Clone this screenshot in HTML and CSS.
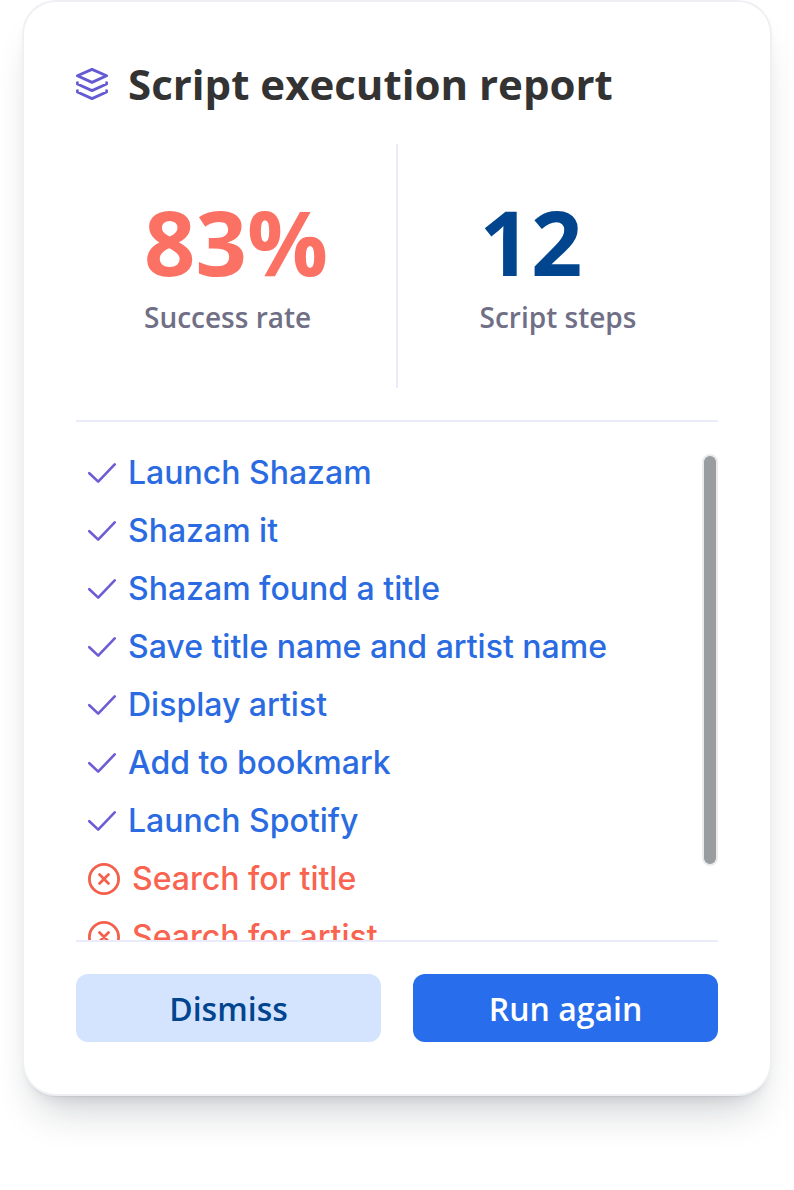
FILE: index.html
```html
<!DOCTYPE html>
<html lang="en">
<head>
    <meta charset="UTF-8">
    <meta name="viewport" content="width=device-width, initial-scale=1.0">
    <title>Script execution report</title>
    <link rel="stylesheet" href="styles.css">
</head>

<body>
    <!--icons used more than once-->
    <svg class="sprite" aria-hidden="true">
        <symbol id="check" viewBox="0 0 28 32">
            <path d="M1.3 16.2 L10.2 24.6 L26.7 7.4"/>
        </symbol>
        <symbol id="cross" viewBox="0 0 32 32">
            <circle cx="16" cy="16" r="14.6"/>
            <path d="M11.5 11.5 L20.5 20.5 M20.5 11.5 L11.5 20.5"/>
        </symbol>
    </svg>

    <main class="card">
        <header class="cardHeader">
            <svg class="layersIcon" viewBox="0 0 32 32" aria-hidden="true">
                <path d="M16 1.4 L30.6 7.8 L16 14.4 L1.4 7.8 Z"/>
                <path d="M1.4 14.7 V16 L16 22.6 L30.6 16 V14.7"/>
                <path d="M1.4 22.7 V24 L16 30.6 L30.6 24 V22.7"/>
            </svg>
            <h1>Script execution report</h1>
        </header>

        <section class="stats">
            <div class="stat">
                <div class="number success">83%</div>
                <div class="label">Success rate</div>
            </div>
            <div class="divider"></div>
            <div class="stat">
                <div class="number steps">12</div>
                <div class="label">Script steps</div>
            </div>
        </section>

        <section class="results">
            <ul class="stepList">
                <li><svg class="check"><use href="#check"/></svg>Launch Shazam</li>
                <li><svg class="check"><use href="#check"/></svg>Shazam it</li>
                <li><svg class="check"><use href="#check"/></svg>Shazam found a title</li>
                <li><svg class="check"><use href="#check"/></svg>Save title name and artist name</li>
                <li><svg class="check"><use href="#check"/></svg>Display artist</li>
                <li><svg class="check"><use href="#check"/></svg>Add to bookmark</li>
                <li><svg class="check"><use href="#check"/></svg>Launch Spotify</li>
                <li class="failed"><svg class="cross"><use href="#cross"/></svg>Search for title</li>
                <li class="failed"><svg class="cross"><use href="#cross"/></svg>Search for artist</li>
            </ul>
            <div class="scrollThumb"></div>
        </section>

        <footer class="actions">
            <button type="button" class="dismiss">Dismiss</button>
            <button type="button" class="run">Run again</button>
        </footer>
    </main>
</body>

</html>
```
FILE: styles.css
```css
* {
    box-sizing: border-box;
}
body {
    margin: 0;
    padding: 2px 24px 96px;
    background-color: #fff;
    font-family: "Open Sans", sans-serif;
}
.sprite {
    display: none;
}
.card {
    padding: 52px;
    background-color: #fff;
    border-radius: 32px;
    box-shadow:
        0 0 0 2px #eef0f3,
        0 2px 2px rgba(20, 30, 60, 0.2),
        0 8px 16px -8px rgba(20, 26, 40, 0.15),
        0 28px 40px -14px rgba(20, 26, 40, 0.22);
}
svg {
    flex: none;
    fill: none;
    stroke-linecap: round;
    stroke-linejoin: round;
}

/* title */
.cardHeader {
    display: flex;
    align-items: center;
    gap: 20px;
    padding-bottom: 30px;
}
.layersIcon {
    width: 32px;
    height: 32px;
    stroke: #645bd3;
    stroke-width: 2.8;
}
h1 {
    margin: 0;
    font-size: 42px;
    line-height: 60px;
    font-weight: 700;
    color: #333;
}

/* numbers */
.stats {
    display: grid;
    grid-template-columns: 1fr 2px 1fr;
    padding-bottom: 32px;
    border-bottom: 2px solid #ebecfb;
}
.stat {
    display: grid;
    justify-content: center;
    padding: 42px 0 50px;
}
.divider {
    background-color: #ebecfb;
}
.number {
    font-size: 90px;
    line-height: 110px;
    font-weight: 700;
}
.success {
    color: #fb7164;
}
.steps {
    color: #02458f;
}
.label {
    font-size: 28px;
    line-height: 42px;
    font-weight: 600;
    color: #706f86;
}

/* steps */
.results {
    display: flex;
    align-items: flex-start;
    height: 520px;
    border-bottom: 2px solid #ebecfb;
    overflow: hidden;
}
.stepList {
    flex: 1;
    margin: 0;
    padding: 22px 0 0 12px;
    list-style: none;
    font-family: Inter, sans-serif;
    font-size: 32px;
    line-height: 58px;
    font-weight: 500;
    color: #2a6be2;
}
.stepList li {
    display: flex;
    align-items: center;
    gap: 12px;
}
.check {
    width: 28px;
    height: 32px;
    stroke: #6c5cd6;
    stroke-width: 2.6;
}
.cross {
    width: 32px;
    height: 32px;
    stroke: #f3614c;
    stroke-width: 2.8;
}
.stepList .failed {
    color: #f9634f;
}
.scrollThumb {
    width: 16px;
    height: 412px;
    margin-top: 32px;
    background-color: #9a9da0;
    border: 2px solid #ebebeb;
    border-radius: 8px;
}

/* buttons */
.actions {
    display: grid;
    grid-template-columns: 1fr 1fr;
    gap: 32px;
    padding-top: 32px;
}
.actions button {
    height: 68px;
    border: none;
    border-radius: 12px;
    font-family: inherit;
    font-size: 32px;
    font-weight: 600;
    cursor: pointer;
}
.dismiss {
    background-color: #d4e4ff;
    color: #02458f;
}
.run {
    background-color: #286deb;
    color: #fff;
}
```
